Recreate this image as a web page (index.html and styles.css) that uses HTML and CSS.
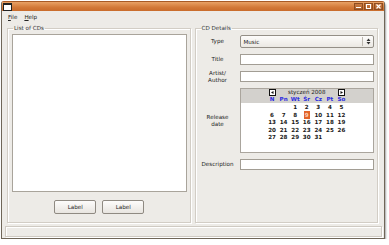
FILE: index.html
```html
<!DOCTYPE html>
<html lang="pl">
<head>
    <meta charset="UTF-8">
    <title>CD Catalog</title>
    <link rel="stylesheet" href="styles.css">
</head>
<body>
    <div class="window">
        <div class="titlebar">
            <span class="app-icon"></span>
            <div class="win-buttons">
                <span class="wbtn">
                    <svg width="7" height="5" viewBox="0 0 7 5"><rect x="1" y="3" width="5" height="1" fill="#fff"/></svg>
                </span>
                <span class="wbtn">
                    <svg width="7" height="5" viewBox="0 0 7 5"><rect x="1.5" y="0.5" width="4" height="4" fill="none" stroke="#fff"/></svg>
                </span>
                <span class="wbtn">
                    <svg width="7" height="5" viewBox="0 0 7 5"><path d="M1.5 0.5 L5.5 4.5 M5.5 0.5 L1.5 4.5" stroke="#fff" stroke-width="1.2"/></svg>
                </span>
            </div>
        </div>
        <div class="menubar">
            <span class="menu"><u>F</u>ile</span>
            <span class="menu"><u>H</u>elp</span>
        </div>
        <div class="main">
            <fieldset class="group">
                <legend>List of CDs</legend>
                <div class="cd-list"></div>
                <div class="actions">
                    <button type="button">Label</button>
                    <button type="button">Label</button>
                </div>
            </fieldset>
            <fieldset class="group">
                <legend>CD Details</legend>
                <div class="form">
                    <label>Type</label>
                    <div class="combo">
                        <span>Music</span>
                        <span class="combo-arrow">
                            <svg width="5" height="7" viewBox="0 0 5 7"><path d="M0.5 3 L2.5 0.5 L4.5 3 Z M0.5 4 L2.5 6.5 L4.5 4 Z" fill="#333"/></svg>
                        </span>
                    </div>

                    <label>Title</label>
                    <input type="text">

                    <label class="two-line">Artist/<br>Author</label>
                    <input type="text">

                    <label class="two-line">Release<br>date</label>
                    <div class="calendar">
                        <div class="cal-head">
                            <div class="cal-grid">
                                <span class="nav">
                                    <svg width="7" height="7" viewBox="0 0 7 7"><rect x="0.5" y="0.5" width="6" height="6" fill="#fff" stroke="#111"/><path d="M4.5 2 L2 3.5 L4.5 5 Z" fill="#111"/></svg>
                                </span>
                                <span class="month">styczeń 2008</span>
                                <span class="nav">
                                    <svg width="7" height="7" viewBox="0 0 7 7"><rect x="0.5" y="0.5" width="6" height="6" fill="#fff" stroke="#111"/><path d="M2.5 2 L5 3.5 L2.5 5 Z" fill="#111"/></svg>
                                </span>
                                <span class="dn">N</span><span class="dn">Pn</span><span class="dn">Wt</span><span class="dn">Śr</span><span class="dn">Cz</span><span class="dn">Pt</span><span class="dn">So</span>
                            </div>
                        </div>
                        <div class="cal-grid days">
                            <span></span><span></span><span>1</span><span>2</span><span>3</span><span>4</span><span>5</span>
                            <span>6</span><span>7</span><span>8</span><span><b class="today">9</b></span><span>10</span><span>11</span><span>12</span>
                            <span>13</span><span>14</span><span>15</span><span>16</span><span>17</span><span>18</span><span>19</span>
                            <span>20</span><span>21</span><span>22</span><span>23</span><span>24</span><span>25</span><span>26</span>
                            <span>27</span><span>28</span><span>29</span><span>30</span><span>31</span><span></span><span></span>
                            <span></span><span></span><span></span><span></span><span></span><span></span><span></span>
                        </div>
                    </div>

                    <label>Description</label>
                    <input type="text">
                </div>
            </fieldset>
        </div>
        <div class="statusbar"></div>
    </div>
</body>
</html>
```

FILE: styles.css
```css
body {
    margin: 0;
    background-color: #fff;
    font-family: "DejaVu Sans", sans-serif;
    font-size: 5.6px;
    color: #222;
}
.window {
    width: 384px;
    height: 238px;
    margin: 1px 0 0 1px;
    box-sizing: border-box;
    border: 1px solid #6f6658;
    border-top-color: #a85a26;
    border-radius: 3px 3px 0 0;
    background-color: #edebe7;
    box-shadow: 1px 2px 2px rgba(0,0,0,0.35);
    display: flex;
    flex-direction: column;
}
.titlebar {
    height: 9px;
    flex: none;
    background: linear-gradient(#e9a266, #d27838 60%, #c96c2c);
    display: flex;
    align-items: center;
    justify-content: space-between;
    padding: 0 1px 0 1px;
}
.app-icon {
    width: 7px;
    height: 5px;
    background-color: #fff;
    border: 1px solid #222;
    border-top-width: 2px;
}
.win-buttons {
    display: flex;
    gap: 1px;
}
.wbtn {
    width: 9px;
    height: 7px;
    display: flex;
    align-items: center;
    justify-content: center;
    background: linear-gradient(#c97b44, #b0602a);
    border: 1px solid #8e4d22;
    box-sizing: border-box;
}
.menubar {
    height: 11px;
    flex: none;
    display: flex;
    align-items: center;
    gap: 7px;
    padding-left: 6px;
    background-color: #edebe7;
}
.main {
    flex: 1;
    display: flex;
    gap: 4px;
    padding: 2px 6px 0 5px;
    min-height: 0;
}
.group {
    flex: 1;
    min-width: 0;
    margin: 0;
    border: 1px solid #d2cdc5;
    box-shadow: inset 1px 1px 0 #fff, 1px 1px 0 #fff;
    padding: 2px 3px 0 4px;
}
.group legend {
    font-size: 5.6px;
    line-height: 8px;
    color: #333;
    padding: 0 1px;
    margin-left: 1px;
}
.cd-list {
    height: 158px;
    background-color: #fff;
    border: 1px solid #a9a49b;
    box-sizing: border-box;
}
.actions {
    display: flex;
    justify-content: center;
    gap: 6px;
    margin-top: 8px;
}
button {
    width: 42px;
    height: 14px;
    padding: 0;
    font-family: inherit;
    font-size: 5.6px;
    color: #222;
    border: 1px solid #8f8a82;
    border-radius: 2px;
    background: linear-gradient(#fdfcfb, #e8e5e0);
}
.form {
    display: grid;
    grid-template-columns: 36px 1fr;
    column-gap: 4px;
    row-gap: 6px;
    align-items: center;
    padding: 1px 0 0 0;
}
.form label {
    text-align: center;
    line-height: 7px;
    color: #222;
}
.form .two-line {
    margin: -2px 0;
}
.combo {
    height: 13px;
    box-sizing: border-box;
    border: 1px solid #948f87;
    border-radius: 2px;
    background: linear-gradient(#fdfcfb, #ebe8e3);
    display: flex;
    align-items: center;
    justify-content: space-between;
    padding-left: 3px;
}
.combo-arrow {
    height: 9px;
    border-left: 1px solid #bdb8b0;
    padding: 0 2px 0 3px;
    display: flex;
    align-items: center;
}
input {
    height: 11px;
    box-sizing: border-box;
    border: 1px solid #a29d94;
    background-color: #fff;
    padding: 0;
    margin: 0;
    width: 100%;
}
.calendar {
    height: 65px;
    box-sizing: border-box;
    border: 1px solid #aaa59d;
    background-color: #fff;
}
.cal-head {
    background-color: #d3d1cd;
}
.cal-grid {
    width: 81px;
    margin: 0 auto;
    display: grid;
    grid-template-columns: repeat(7, 1fr);
    grid-auto-rows: 7px;
    align-items: center;
    justify-items: center;
    line-height: 7px;
}
.nav {
    display: flex;
}
.month {
    grid-column: span 5;
    color: #222;
}
.dn {
    color: #2a2ae0;
    font-weight: bold;
}
.days {
    grid-auto-rows: 7.5px;
    padding-top: 1px;
    font-weight: bold;
    color: #1a1a1a;
}
.today {
    display: inline-block;
    width: 6px;
    height: 8px;
    line-height: 8px;
    text-align: center;
    background-color: #e2642a;
    color: #fbd3bd;
}
.statusbar {
    height: 11px;
    flex: none;
    margin: 3px 2px 1px 3px;
    border: 1px solid #cfcac2;
    box-shadow: inset 1px 1px 0 #fff, 1px 1px 0 #fff;
    box-sizing: border-box;
}
```
